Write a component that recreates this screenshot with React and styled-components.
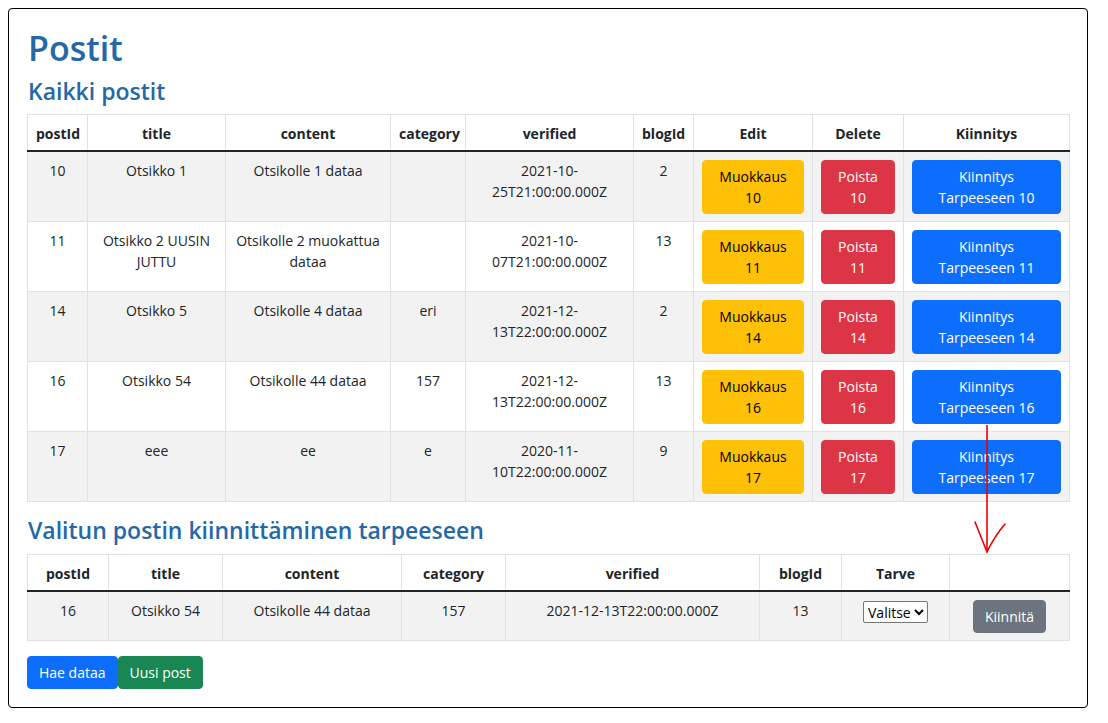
import React from 'react';
import styled, { createGlobalStyle } from 'styled-components';

const GlobalStyle = createGlobalStyle`
  body {
    margin: 8px;
    font-family: 'Open Sans', 'Noto Sans', sans-serif;
    font-size: 14px;
    line-height: 1.5;
    color: #212529;
    background: #fff;
  }
`;

const Frame = styled.div`
  position: relative;
  width: 1080px;
  height: 700px;
  box-sizing: border-box;
  border: 1px solid #000;
  border-radius: 4px;
  padding: 19px 18px 18px;
`;

const Title = styled.h1`
  margin: 0 0 9px 1px;
  font-size: 34px;
  line-height: 1.2;
  font-weight: 600;
  color: #2468a8;
`;

const SubTitle = styled.h3`
  margin: 0 0 9px 1px;
  font-size: 23px;
  line-height: 1.2;
  font-weight: 600;
  color: #2468a8;
`;

const SectionTitle = styled(SubTitle)`
  margin-top: 15px;
`;

const Table = styled.table`
  width: 1042px;
  table-layout: fixed;
  border-collapse: collapse;
  border: 1px solid #dee2e6;
`;

const Th = styled.th`
  padding: 8px 8px 6px;
  font-weight: 700;
  text-align: center;
  border: 1px solid #dee2e6;
  border-bottom: 2px solid #212529;
`;

const Row = styled.tr`
  background: ${(p) => (p.$striped ? '#f2f2f2' : '#fff')};
`;

const Td = styled.td`
  padding: 8px 8px 7px;
  text-align: center;
  vertical-align: top;
  border: 1px solid #dee2e6;
`;

const colors = {
  warning: { bg: '#ffc107', fg: '#000' },
  danger: { bg: '#dc3545', fg: '#fff' },
  primary: { bg: '#0d6efd', fg: '#fff' },
  secondary: { bg: '#6c757d', fg: '#fff' },
  success: { bg: '#198754', fg: '#fff' },
};

const Button = styled.button`
  display: inline-block;
  box-sizing: border-box;
  width: ${(p) => (p.$block ? '100%' : 'auto')};
  padding: 5px 11px;
  font-family: inherit;
  font-size: 14px;
  line-height: 21px;
  border: 1px solid ${(p) => colors[p.$variant].bg};
  border-radius: 4px;
  background: ${(p) => colors[p.$variant].bg};
  color: ${(p) => colors[p.$variant].fg};
  text-align: center;
`;

const Select = styled.select`
  font-family: inherit;
  font-size: 14px;
  height: 22px;
  margin-top: 1px;
  border: 1px solid #767676;
  border-radius: 2px;
  background: #fff;
  color: #000;
`;

const ButtonBar = styled.div`
  display: flex;
  margin-top: 15px;
`;

const Arrow = styled.svg`
  position: absolute;
  left: 957px;
  top: 406px;
`;

const posts = [
  { id: 10, title: 'Otsikko 1', content: 'Otsikolle 1 dataa', category: '', verified: '2021-10-25T21:00:00.000Z', blog: 2 },
  { id: 11, title: 'Otsikko 2 UUSIN JUTTU', content: 'Otsikolle 2 muokattua dataa', category: '', verified: '2021-10-07T21:00:00.000Z', blog: 13 },
  { id: 14, title: 'Otsikko 5', content: 'Otsikolle 4 dataa', category: 'eri', verified: '2021-12-13T22:00:00.000Z', blog: 2 },
  { id: 16, title: 'Otsikko 54', content: 'Otsikolle 44 dataa', category: '157', verified: '2021-12-13T22:00:00.000Z', blog: 13 },
  { id: 17, title: 'eee', content: 'ee', category: 'e', verified: '2020-11-10T22:00:00.000Z', blog: 9 },
];

const mainCols = [60, 138, 165, 75, 168, 60, 119, 91, 166];
const pickCols = [81, 114, 179, 104, 254, 82, 108, 120];

function splitDate(v) {
  const i = v.indexOf('-', 5);
  return (
    <>
      {v.slice(0, i + 1)}
      <br />
      {v.slice(i + 1)}
    </>
  );
}

export default function App() {
  const chosen = posts[3];
  return (
    <>
      <GlobalStyle />
      <Frame>
        <Title>Postit</Title>
        <SubTitle>Kaikki postit</SubTitle>
        <Table>
          <colgroup>
            {mainCols.map((w, i) => (
              <col key={i} style={{ width: w }} />
            ))}
          </colgroup>
          <thead>
            <tr>
              <Th>postId</Th>
              <Th>title</Th>
              <Th>content</Th>
              <Th>category</Th>
              <Th>verified</Th>
              <Th>blogId</Th>
              <Th>Edit</Th>
              <Th>Delete</Th>
              <Th>Kiinnitys</Th>
            </tr>
          </thead>
          <tbody>
            {posts.map((p, i) => (
              <Row key={p.id} $striped={i % 2 === 0}>
                <Td>{p.id}</Td>
                <Td>{p.title}</Td>
                <Td>{p.content}</Td>
                <Td>{p.category}</Td>
                <Td>{splitDate(p.verified)}</Td>
                <Td>{p.blog}</Td>
                <Td>
                  <Button $variant="warning" $block>
                    Muokkaus
                    <br />
                    {p.id}
                  </Button>
                </Td>
                <Td>
                  <Button $variant="danger" $block>
                    Poista
                    <br />
                    {p.id}
                  </Button>
                </Td>
                <Td>
                  <Button $variant="primary" $block>
                    Kiinnitys
                    <br />
                    Tarpeeseen {p.id}
                  </Button>
                </Td>
              </Row>
            ))}
          </tbody>
        </Table>

        <SectionTitle>Valitun postin kiinnittäminen tarpeeseen</SectionTitle>
        <Table>
          <colgroup>
            {pickCols.map((w, i) => (
              <col key={i} style={{ width: w }} />
            ))}
          </colgroup>
          <thead>
            <tr>
              <Th>postId</Th>
              <Th>title</Th>
              <Th>content</Th>
              <Th>category</Th>
              <Th>verified</Th>
              <Th>blogId</Th>
              <Th>Tarve</Th>
              <Th></Th>
            </tr>
          </thead>
          <tbody>
            <Row $striped>
              <Td>{chosen.id}</Td>
              <Td>{chosen.title}</Td>
              <Td>{chosen.content}</Td>
              <Td>{chosen.category}</Td>
              <Td>{chosen.verified}</Td>
              <Td>{chosen.blog}</Td>
              <Td>
                <Select defaultValue="">
                  <option value="">Valitse</option>
                </Select>
              </Td>
              <Td>
                <Button $variant="secondary">Kiinnitä</Button>
              </Td>
            </Row>
          </tbody>
        </Table>

        <ButtonBar>
          <Button $variant="primary">Hae dataa</Button>
          <Button $variant="success">Uusi post</Button>
        </ButtonBar>

        <Arrow width="44" height="142" viewBox="0 0 44 142">
          <path d="M21 10 L21 137" stroke="#e00" strokeWidth="1.6" fill="none" />
          <path d="M9 107 Q15 122 21 137 Q28 122 39 109" stroke="#e00" strokeWidth="1.6" fill="none" strokeLinecap="round" />
        </Arrow>
      </Frame>
    </>
  );
}
